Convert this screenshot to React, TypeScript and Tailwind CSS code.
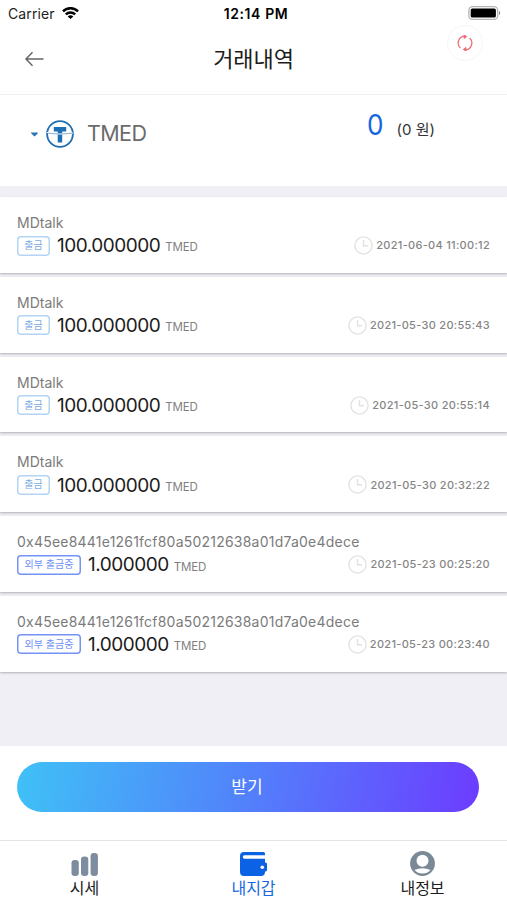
import React from 'react';
import { FaCaretDown } from 'react-icons/fa';

interface Transaction {
  target: string;
  pending?: boolean;
  amount: string;
  date: string;
}

const transactions: Transaction[] = [
  { target: 'MDtalk', amount: '100.000000', date: '2021-06-04 11:00:12' },
  { target: 'MDtalk', amount: '100.000000', date: '2021-05-30 20:55:43' },
  { target: 'MDtalk', amount: '100.000000', date: '2021-05-30 20:55:14' },
  { target: 'MDtalk', amount: '100.000000', date: '2021-05-30 20:32:22' },
  { target: '0x45ee8441e1261fcf80a50212638a01d7a0e4dece', pending: true, amount: '1.000000', date: '2021-05-23 00:25:20' },
  { target: '0x45ee8441e1261fcf80a50212638a01d7a0e4dece', pending: true, amount: '1.000000', date: '2021-05-23 00:23:40' },
];

function StatusBar() {
  return (
    <div className="grid grid-cols-3 items-center h-7 pl-2 pr-[6px] text-[14px] text-[#222]">
      <div className="flex items-center gap-[7px] -mt-px">
        <span className="tracking-[0.1px]">Carrier</span>
        <svg className="w-[17px] h-3 -mt-px" viewBox="0 0 17 12" fill="none" stroke="#000" strokeWidth="2.4">
          <path d="M1 4.3a10.6 10.6 0 0 1 15 0" />
          <path d="M3.8 7.4a6.6 6.6 0 0 1 9.4 0" />
          <path d="M8.5 12 5.7 9.4a3.9 3.9 0 0 1 5.6 0Z" fill="#000" stroke="none" />
        </svg>
      </div>
      <div className="-mt-px pl-[3px] text-center font-semibold text-black text-[14px] tracking-[0.6px]">12:14 PM</div>
      <svg className="justify-self-end w-[33px] h-[14px] -mt-[2px]" viewBox="0 0 33 14">
        <rect x="0.9" y="0.6" width="28.8" height="12.8" rx="3.6" fill="none" stroke="#b5b5b5" strokeWidth="1.3" />
        <rect x="2.7" y="2.4" width="25.2" height="9.2" rx="1.6" fill="#000" />
        <path d="M31 4.8v4.4c1.6-.7 1.6-3.7 0-4.4Z" fill="#888" />
      </svg>
    </div>
  );
}

function Header() {
  return (
    <header className="relative flex items-center h-[67px] px-6 pb-[5px] border-b border-[#f2f2f2]">
      <svg className="w-5 h-4" viewBox="0 0 20 16" fill="none" stroke="#666" strokeWidth="1.5">
        <path d="M19.5 8H2M8.5 1.2 2 8l6.5 6.8" />
      </svg>
      <h1 className="flex-1 text-center pr-[20px] text-[22px] leading-8 tracking-[-0.1px] text-[#1c1c1c]">거래내역</h1>
      <button className="absolute right-6 -top-[3px] flex items-center justify-center w-9 h-9 rounded-full bg-white border border-[#f6f6f8]">
        <svg className="w-4 h-4" viewBox="0 0 16 16" fill="none" stroke="#ee6b75" strokeWidth="1.3">
          <path d="M3.4 13A6.8 6.8 0 0 1 7.9 1.2M12.6 3A6.8 6.8 0 0 1 8.1 14.8" />
          <path d="m7.2 .3 2 1.2L7.4 3ZM8.800 15.700l-2-1.200L8.600 13Z" fill="#ee6b75" />
        </svg>
      </button>
    </header>
  );
}

function Balance() {
  return (
    <section className="flex items-start h-[91px] pl-[30px] pt-[22px]">
      <div className="flex items-center h-8">
        <FaCaretDown className="mt-px w-[9px] h-3 text-[#2873b8]" />
        <svg className="ml-[7px] mt-px w-7 h-7" viewBox="0 0 28 28">
          <circle cx="14" cy="14" r="12.9" fill="#fff" stroke="#216fae" strokeWidth="1.8" />
          <path d="M7.8 7h12.4v4.6h-4v10.8h-4.500V11.600H7.800Z" fill="#1e70b5" />
          <path d="M1 12.5q13 3 26 .5" fill="none" stroke="#fff" strokeWidth="1.2" />
          <path d="M2 13.2q12 2 24 0" fill="none" stroke="#75a7cf" strokeWidth="0.9" />
        </svg>
        <span className="ml-[13px] text-[21.5px] tracking-[-0.6px] text-[#6b6b6b]">TMED</span>
      </div>
      <div className="flex items-baseline ml-auto mr-[72px] -mt-[14px]">
        <span className="inline-block scale-x-90 text-[29px] text-[#1266df]">0</span>
        <span className="ml-[12px] text-[15px] text-[#333]">(0 원)</span>
      </div>
    </section>
  );
}

function TransactionRow({ item }: { item: Transaction }) {
  return (
    <li className="h-[75.8px] px-[17px] pt-4 bg-white shadow-[0_0.5px_2px_rgba(0,0,0,0.27)]">
      <div className={`h-5 text-[14px] leading-[19px] text-[#7b7b7b] ${item.pending ? 'tracking-[0.22px]' : 'tracking-[0]'}`}>
        {item.target}
      </div>
      <div className="flex items-center h-[25px]">
        {item.pending ? (
          <span className="flex items-center justify-center w-16 h-5 rounded-[4px] shadow-[inset_0_0_0_1.5px_#7592f8] text-[10px] text-[#7090f7]">
            외부 출금중
          </span>
        ) : (
          <span className="flex items-center justify-center w-[33px] h-5 rounded-[4px] shadow-[inset_0_0_0_1.5px_#b3d4f3] text-[10px] text-[#7eaee2]">
            출금
          </span>
        )}
        <span className="ml-[7px] mt-[2px] text-[19px] text-[#1c1c1c] tracking-[-0.5px]">{item.amount}</span>
        <span className="ml-[5px] mt-[5px] text-[11.5px] tracking-[-0.1px] text-[#808080]">TMED</span>
        <span className="flex items-center gap-[3px] ml-auto">
          <svg className="w-[19px] h-[19px]" viewBox="0 0 19 19" fill="none" stroke="#e2e2e2" strokeWidth="1.4">
            <circle cx="9.5" cy="9.5" r="8.6" />
            <path d="M9.5 4v5.8h4.3" />
          </svg>
          <span className="text-[11px] text-[#858585] font-medium tracking-[0.3px]">{item.date}</span>
        </span>
      </div>
    </li>
  );
}

function TabBar() {
  return (
    <nav className="grid grid-cols-3 h-[60px] pt-[10px] border-t border-[#e3e3e3] text-[16px] leading-[22px] text-[#1c1c1c]">
      <a className="flex flex-col items-center">
        <svg className="w-[27px] h-[26px]" viewBox="0 0 27 26" fill="#7d8c9e">
          <rect x="0.5" y="9" width="7.3" height="16" rx="3.2" />
          <rect x="10" y="5.5" width="7.3" height="19.5" rx="3.2" />
          <rect x="19.6" y="2" width="7.3" height="23" rx="3.2" />
        </svg>
        <span>시세</span>
      </a>
      <a className="flex flex-col items-center text-[#1769e0]">
        <svg className="w-[27px] h-[26px]" viewBox="0 0 27 26">
          <path d="M4 1H23.5a1.5 1.5 0 0 1 1.5 1.5V21a4 4 0 0 1-4 4H4a4 4 0 0 1-4-4V5A4 4 0 0 1 4 1Z" fill="#0c62e4" />
          <path d="M27 4.3H4.5a1.7 1.7 0 0 0 0 3.4H27Z" fill="#fff" />
          <path d="M22 11.5h3.5a1.5 1.5 0 0 1 1.5 1.5v6a1.5 1.5 0 0 1-1.5 1.5H22Z" fill="#0c62e4" />
          <circle cx="22.3" cy="16.3" r="1.8" fill="#fff" />
        </svg>
        <span>내지갑</span>
      </a>
      <a className="flex flex-col items-center">
        <svg className="w-[26px] h-[26px]" viewBox="0 0 26 26">
          <circle cx="12.5" cy="12.5" r="12.4" fill="#7b8996" />
          <circle cx="12.5" cy="9.8" r="6" fill="#fff" />
          <path d="M4.5 19q8-3.5 16 0Q17.5 22.5 12.5 22.5T4.500 19Z" fill="#fff" />
        </svg>
        <span>내정보</span>
      </a>
    </nav>
  );
}

export default function App() {
  return (
    <div className="flex flex-col w-[507px] h-[900px] overflow-hidden bg-white font-['Inter','Noto_Sans_CJK_KR',sans-serif]">
      <StatusBar />
      <Header />
      <Balance />
      <main className="flex-1 min-h-0 pt-[11px] bg-[#f0eff6]">
        <ul className="flex flex-col gap-1">
          {transactions.map((item) => (
            <TransactionRow key={item.date} item={item} />
          ))}
        </ul>
      </main>
      <div className="h-[94px] pt-4 pl-[17px] pr-7">
        <button className="w-full h-[50px] pt-px pr-[2px] rounded-full bg-[linear-gradient(100deg,#3fc1f6,#5281fb_50%,#6c3cff)] text-white text-[17px]">
          받기
        </button>
      </div>
      <TabBar />
    </div>
  );
}
